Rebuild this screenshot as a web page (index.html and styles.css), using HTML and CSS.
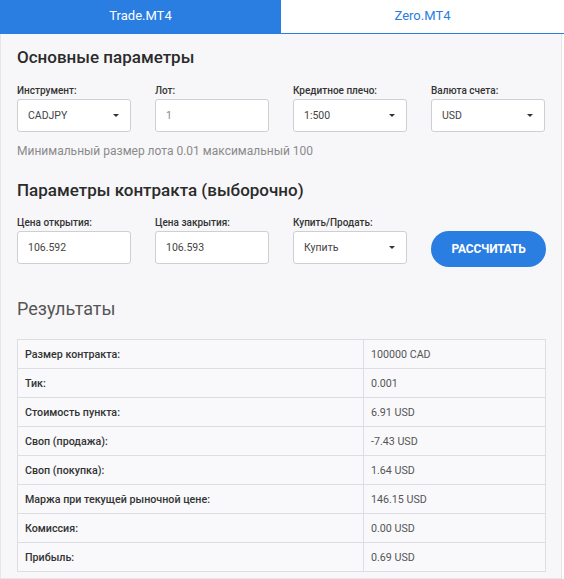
FILE: index.html
```html
<!DOCTYPE html>
<html lang="ru">
<head>
<meta charset="utf-8">
<title>Калькулятор трейдера</title>
<link rel="stylesheet" href="styles.css">
</head>
<body>
<div class="tabs">
  <div class="tab active">Trade.MT4</div>
  <div class="tab">Zero.MT4</div>
</div>
<div class="panel">
  <h2 class="title">Основные параметры</h2>
  <div class="grid">
    <div class="field">
      <label class="label">Инструмент:</label>
      <div class="control select">CADJPY<span class="caret"></span></div>
    </div>
    <div class="field">
      <label class="label">Лот:</label>
      <div class="control muted">1</div>
    </div>
    <div class="field">
      <label class="label">Кредитное плечо:</label>
      <div class="control select">1:500<span class="caret"></span></div>
    </div>
    <div class="field">
      <label class="label">Валюта счета:</label>
      <div class="control select">USD<span class="caret"></span></div>
    </div>
  </div>
  <p class="hint">Минимальный размер лота 0.01 максимальный 100</p>

  <h2 class="title title2">Параметры контракта (выборочно)</h2>
  <div class="grid grid2">
    <div class="field">
      <label class="label">Цена открытия:</label>
      <div class="control">106.592</div>
    </div>
    <div class="field">
      <label class="label">Цена закрытия:</label>
      <div class="control">106.593</div>
    </div>
    <div class="field">
      <label class="label">Купить/Продать:</label>
      <div class="control select">Купить<span class="caret"></span></div>
    </div>
    <div class="field btn-field">
      <button class="btn">РАССЧИТАТЬ</button>
    </div>
  </div>

  <h3 class="results-title">Результаты</h3>
  <table class="results">
    <tr><td class="k">Размер контракта:</td><td class="v">100000 CAD</td></tr>
    <tr><td class="k">Тик:</td><td class="v">0.001</td></tr>
    <tr><td class="k">Стоимость пункта:</td><td class="v">6.91 USD</td></tr>
    <tr><td class="k">Своп (продажа):</td><td class="v">-7.43 USD</td></tr>
    <tr><td class="k">Своп (покупка):</td><td class="v">1.64 USD</td></tr>
    <tr><td class="k">Маржа при текущей рыночной цене:</td><td class="v">146.15 USD</td></tr>
    <tr><td class="k">Комиссия:</td><td class="v">0.00 USD</td></tr>
    <tr><td class="k">Прибыль:</td><td class="v">0.69 USD</td></tr>
  </table>
</div>
</body>
</html>
```

FILE: styles.css
```css
* { box-sizing: border-box; }
html, body {
  margin: 0;
  padding: 0;
  background: #ffffff;
  font-family: Roboto, "Liberation Sans", Arial, sans-serif;
  color: #333;
}
.tabs {
  display: flex;
  height: 34px;
  border-bottom: 1px solid #2a7de1;
}
.tab {
  flex: 1;
  display: flex;
  align-items: center;
  justify-content: center;
  font-size: 13px;
  color: #2a7de1;
  background: #fff;
  padding-bottom: 2px;
}
.tab.active {
  flex: 0 0 281px;
  background: #2a7de1;
  color: #fff;
}
.panel {
  width: 562px;
  background: #f7f7f9;
  border: 1px solid #e6e6ea;
  border-top: none;
  padding: 12px 16px 8px 16px;
  height: 545px;
}
.title {
  margin: 0;
  font-size: 17px;
  font-weight: 500;
  line-height: 22px;
  color: #2b2b2b;
}
.title2 { margin-top: 20px; }
.grid {
  display: grid;
  grid-template-columns: repeat(4, 114px);
  column-gap: 24px;
  margin-top: 17px;
}
.grid2 { margin-top: 16px; }
.field {
  display: flex;
  flex-direction: column;
}
.label {
  font-size: 10px;
  font-weight: 500;
  line-height: 12px;
  color: #333;
  height: 14px;
}
.control {
  position: relative;
  height: 33px;
  background: #fff;
  border: 1px solid #cfcfd3;
  border-radius: 3px;
  font-size: 10.5px;
  color: #444;
  display: flex;
  align-items: center;
  padding-left: 10px;
}
.control.muted { color: #888; }
.caret {
  position: absolute;
  right: 11px;
  top: 14px;
  width: 0;
  height: 0;
  border-left: 3.5px solid transparent;
  border-right: 3.5px solid transparent;
  border-top: 3.5px solid #333;
}
.hint {
  margin: 11px 0 0 0;
  font-size: 12px;
  line-height: 16px;
  color: #8a8a8a;
}
.btn-field {
  justify-content: flex-start;
  padding-top: 14px;
}
.btn {
  width: 115px;
  height: 36px;
  border: none;
  border-radius: 18px;
  background: #2a7de1;
  color: #fff;
  font-family: Roboto, "Liberation Sans", Arial, sans-serif;
  font-size: 12px;
  font-weight: 700;
  letter-spacing: -0.2px;
  padding: 0;
}
.results-title {
  margin: 30px 0 0 0;
  font-size: 18px;
  font-weight: 400;
  line-height: 24px;
  color: #555;
}
.results {
  margin-top: 18px;
  width: 529px;
  border-collapse: collapse;
  background: #f9f9fb;
}
.results td {
  border: 1px solid #dedee2;
  height: 29px;
  font-size: 10.7px;
  padding: 0 7px;
  vertical-align: middle;
}
.results td.k {
  width: 346px;
  font-weight: 500;
  color: #333;
}
.results td.v {
  color: #555;
}
```
